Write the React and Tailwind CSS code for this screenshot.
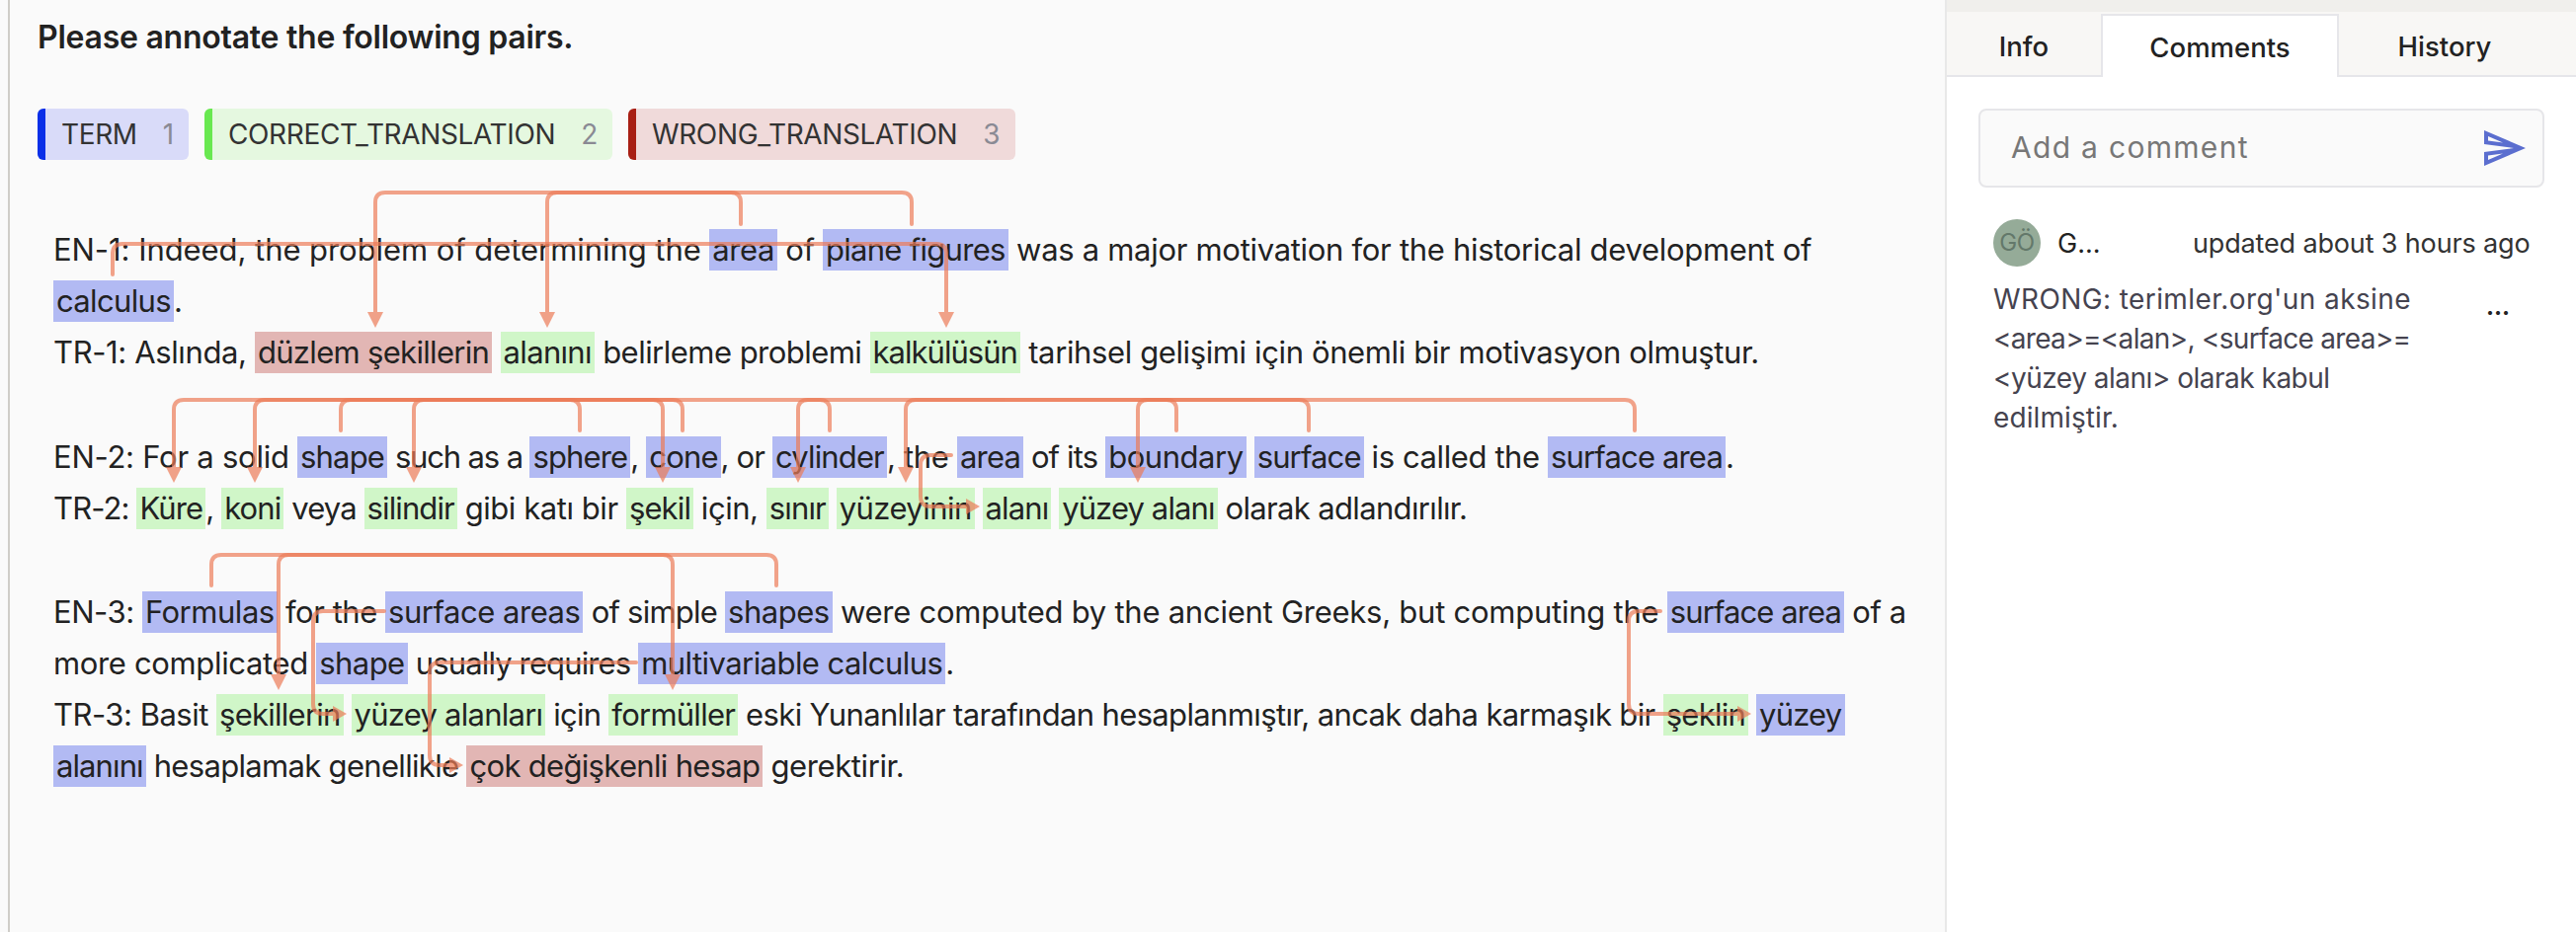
import React from "react";

const SANS = "font-['Inter','Noto_Sans',sans-serif]";

const legend = [
  { label: "TERM", key: "1", bg: "bg-[#d9dbf9]", bar: "bg-[#0a2fe8]", width: "w-[153px]" },
  { label: "CORRECT_TRANSLATION", key: "2", bg: "bg-[#e5f8e0]", bar: "bg-[#68e850]", width: "w-[413px]" },
  { label: "WRONG_TRANSLATION", key: "3", bg: "bg-[#f0dada]", bar: "bg-[#a81f14]", width: "w-[392px]" },
];

const T = ({ children, className = "" }) => <span className={`inline-block h-[42px] px-[3px] leading-[42px] bg-[#b2baf3] ${className}`}>{children}</span>;
const C = ({ children, className = "" }) => <span className={`inline-block h-[42px] px-[3px] leading-[42px] bg-[#d0f6c8] ${className}`}>{children}</span>;
const W = ({ children, className = "" }) => <span className={`inline-block h-[42px] px-[3px] leading-[42px] bg-[#e2b6b4] ${className}`}>{children}</span>;

// each path runs from the term down to the translation, in page coordinates
const top = (src, dst, y, from, to) => {
  const dir = dst > src ? 10 : -10;
  return `M${src} ${from}V${y + 10}Q${src} ${y} ${src + dir} ${y}H${dst - dir}Q${dst} ${y} ${dst} ${y + 10}V${to}`;
};
const side = (x0, y0, x1, y1, x2) => `M${x0} ${y0}H${x1 + 10}Q${x1} ${y0} ${x1} ${y0 + 10}V${y1 - 10}Q${x1} ${y1} ${x1 + 10} ${y1}H${x2}`;

const arrows = [
  { d: top(750, 380, 195, 227, 318), tip: [380, 332] },
  { d: top(923, 554, 195, 227, 318), tip: [554, 332] },
  { d: top(114, 958, 247, 278, 318), tip: [958, 332] },
  { d: top(587, 176, 405, 436, 474), tip: [176, 489] },
  { d: top(691, 258, 405, 436, 474), tip: [258, 489] },
  { d: top(345, 671, 405, 436, 474), tip: [671, 489] },
  { d: top(840, 419, 405, 436, 474), tip: [419, 489] },
  { d: top(1191, 808, 405, 436, 474), tip: [808, 489] },
  { d: top(1325, 917, 405, 436, 474), tip: [917, 489] },
  { d: top(1655, 1152, 405, 436, 474), tip: [1152, 489] },
  { d: side(963, 461, 932, 513, 979), tip: [992, 513], right: true },
  { d: top(214, 681, 562, 593, 684), tip: [681, 699] },
  { d: top(786, 282, 562, 593, 684), tip: [282, 699] },
  { d: side(389, 619, 317, 723, 338), tip: [351, 723], right: true },
  { d: side(644, 671, 435, 775, 456), tip: [469, 775], right: true },
  { d: side(1681, 619, 1649, 723, 1760), tip: [1773, 723], right: true },
];

const head = ([x, y], right) =>
  right ? `${x},${y} ${x - 14},${y - 8} ${x - 14},${y + 8}` : `${x},${y} ${x - 8},${y - 16} ${x + 8},${y - 16}`;

const Arrows = () => (
  <svg className="absolute left-0 top-0 pointer-events-none" width="1968" height="944" fill="none">
    {arrows.map((a, i) => (
      <g key={i} opacity="0.7">
        <path d={a.d} stroke="#ec7c58" strokeWidth="4" strokeLinecap="round" />
        <polygon points={head(a.tip, a.right)} fill="#ec7c58" />
      </g>
    ))}
  </svg>
);

const SendIcon = () => (
  <svg width="48" height="48" viewBox="0 0 24 24" fill="#5b6ecf">
    <path d="M4.01 6.03l7.51 3.22-7.52-1 .01-2.22m7.5 8.72L4 17.97v-2.22l7.51-1M2.01 3L2 10l15 2-15 2 .01 7L23 12 2.01 3z" />
  </svg>
);

export default function App() {
  return (
    <div className={`flex h-[944px] w-[2608px] overflow-hidden bg-[#fafafa] text-[#222] ${SANS}`}>
      <main className="relative ml-2 w-[1961px] shrink-0 border-l-2 border-[#cfcdc8] pl-7">
        <h1 className="pt-[18px] text-[32px] font-semibold leading-[40px] tracking-[-0.25px]">Please annotate the following pairs.</h1>

        <div className="mt-[52px] flex gap-4">
          {legend.map((item) => (
            <div key={item.label} className={`flex h-[52px] items-center overflow-hidden rounded-md ${item.bg} ${item.width}`}>
              <span className={`h-full w-2 ${item.bar}`} />
              <span className="ml-4 text-[28px] tracking-[-0.37px] text-[#333]">{item.label}</span>
              <span className="ml-[26px] text-[28px] text-[#8a8a94]">{item.key}</span>
            </div>
          ))}
        </div>

        <div className="mt-[65px] ml-[16px] whitespace-nowrap text-[31px] leading-[52px]">
          <p className="tracking-[-0.41px]">
            <span className="tracking-[-0.06px]">EN-1: Indeed, the problem of determining the </span>
            <T>area</T> of <T className="tracking-[-0.7px]">plane figures</T> <span className="tracking-[-0.3px]">was a major motivation for the historical development of</span>
          </p>
          <p className="tracking-[-0.28px]"><T className="tracking-[-0.65px]">calculus</T>.</p>
          <p className="tracking-[-0.38px]">
            TR-1: Aslında, <W className="tracking-[-0.68px]">düzlem şekillerin</W> <C className="tracking-[-0.68px]">alanını</C> <span className="tracking-[-0.53px]">belirleme problemi </span>
            <C className="tracking-[-0.98px]">kalkülüsün</C> tarihsel gelişimi için önemli bir motivasyon olmuştur.
          </p>

          <p className="mt-[54px] tracking-[-0.85px]">
            <span className="tracking-[-0.25px]">EN-2: For a solid </span>
            <T>shape</T> <span className="tracking-[-1.15px]">such as a </span>
            <T>sphere</T>, <T>cone</T>, or <T>cylinder</T><span className="tracking-[-0.3px]">, the </span>
            <T>area</T> of its <T className="tracking-[-0.45px]">boundary</T> <T>surface</T> <span className="tracking-[-0.4px]">is called the </span>
            <T>surface area</T>.
          </p>
          <p className="tracking-[-0.88px]">
            TR-2: <C>Küre</C>, <C>koni</C> veya <C>silindir</C> <span className="tracking-[-0.44px]">gibi katı bir </span>
            <C>şekil</C> <span className="tracking-[-0.45px]">için, </span>
            <C>sınır</C> <C className="tracking-[-0.55px]">yüzeyinin</C> <C>alanı</C> <C>yüzey alanı</C> <span className="tracking-[-0.65px]">olarak adlandırılır.</span>
          </p>

          <p className="mt-[53px] tracking-[-0.47px]">
            EN-3: <T>Formulas</T> for the <T>surface areas</T> <span className="tracking-[-0.77px]">of simple </span>
            <T>shapes</T> <span className="tracking-[-0.25px]">were computed by the ancient Greeks, but computing the </span>
            <T className="tracking-[-0.9px]">surface area</T> of a
          </p>
          <p className="tracking-[-0.55px]">
            <span className="tracking-[-0.35px]">more complicated </span>
            <T>shape</T> <span className="tracking-[-0.87px]">usually requires </span>
            <T>multivariable calculus</T>.
          </p>
          <p className="tracking-[-0.75px]">
            <span className="tracking-[-0.5px]">TR-3: Basit </span>
            <C>şekillerin</C> <C>yüzey alanları</C> için <C>formüller</C> <span className="tracking-[-0.64px]">eski Yunanlılar tarafından hesaplanmıştır, ancak daha karmaşık bir </span>
            <C>şeklin</C> <T>yüzey</T>
          </p>
          <p className="tracking-[-0.68px]">
            <T className="tracking-[-0.9px]">alanını</T> hesaplamak genellikle <W>çok değişkenli hesap</W> <span className="tracking-[-0.4px]">gerektirir.</span>
          </p>
        </div>
      </main>

      <Arrows />

      <aside className="flex-1 border-l-2 border-[#e8e8e8] bg-white">
        <div className="h-3 bg-[#f0efec]" />
        <div className="flex h-[66px] border-b-2 border-[#e6e6ea] bg-[#f8f7f5] text-[27.5px] font-medium">
          <div className="flex w-[156px] items-center justify-center pt-2">Info</div>
          <div className="mb-[-2px] mt-0.5 flex w-[241px] items-center justify-center border-2 border-b-0 border-[#e6e6ea] bg-white pt-1">Comments</div>
          <div className="flex w-[214px] items-center justify-center pt-2">History</div>
        </div>

        <div className="ml-[32px] mt-8 flex h-[80px] w-[573px] items-center justify-between rounded-lg border-2 border-[#e6e6e9] bg-[#fafafa] pl-[31px] pr-[15px]">
          <span className="pb-0.5 text-[30px] tracking-[1.3px] text-[#777]">Add a comment</span>
          <SendIcon />
        </div>

        <div className="ml-[47px] mt-8 flex h-12 items-center">
          <div className="flex h-12 w-12 items-center justify-center rounded-full bg-[#95ab98] text-[24px] tracking-[-0.5px] text-[#63786a]">GÖ</div>
          <span className="ml-[17px] w-[137px] pt-0.5 text-[27px]">G...</span>
          <span className="pt-0.5 text-[27px] tracking-[-0.15px] text-[#333]">updated about 3 hours ago</span>
        </div>

        <div className="ml-[47px] mt-[13px] flex text-[28px] leading-[40px] text-[#45434f]">
          <p className="w-[499px]">
            <span className="tracking-[0.4px]">WRONG: terimler.org'un aksine</span>
            <br />
            <span className="tracking-[-0.7px]">&lt;area&gt;=&lt;alan&gt;, &lt;surface area&gt;=</span>
            <br />
            <span className="tracking-[-0.5px]">&lt;yüzey alanı&gt; olarak kabul</span>
            <br />
            <span className="tracking-[0.1px]">edilmiştir.</span>
          </p>
          <span className="mt-5 text-[24px] font-bold leading-[16px] text-[#222]">...</span>
        </div>
      </aside>
    </div>
  );
}
